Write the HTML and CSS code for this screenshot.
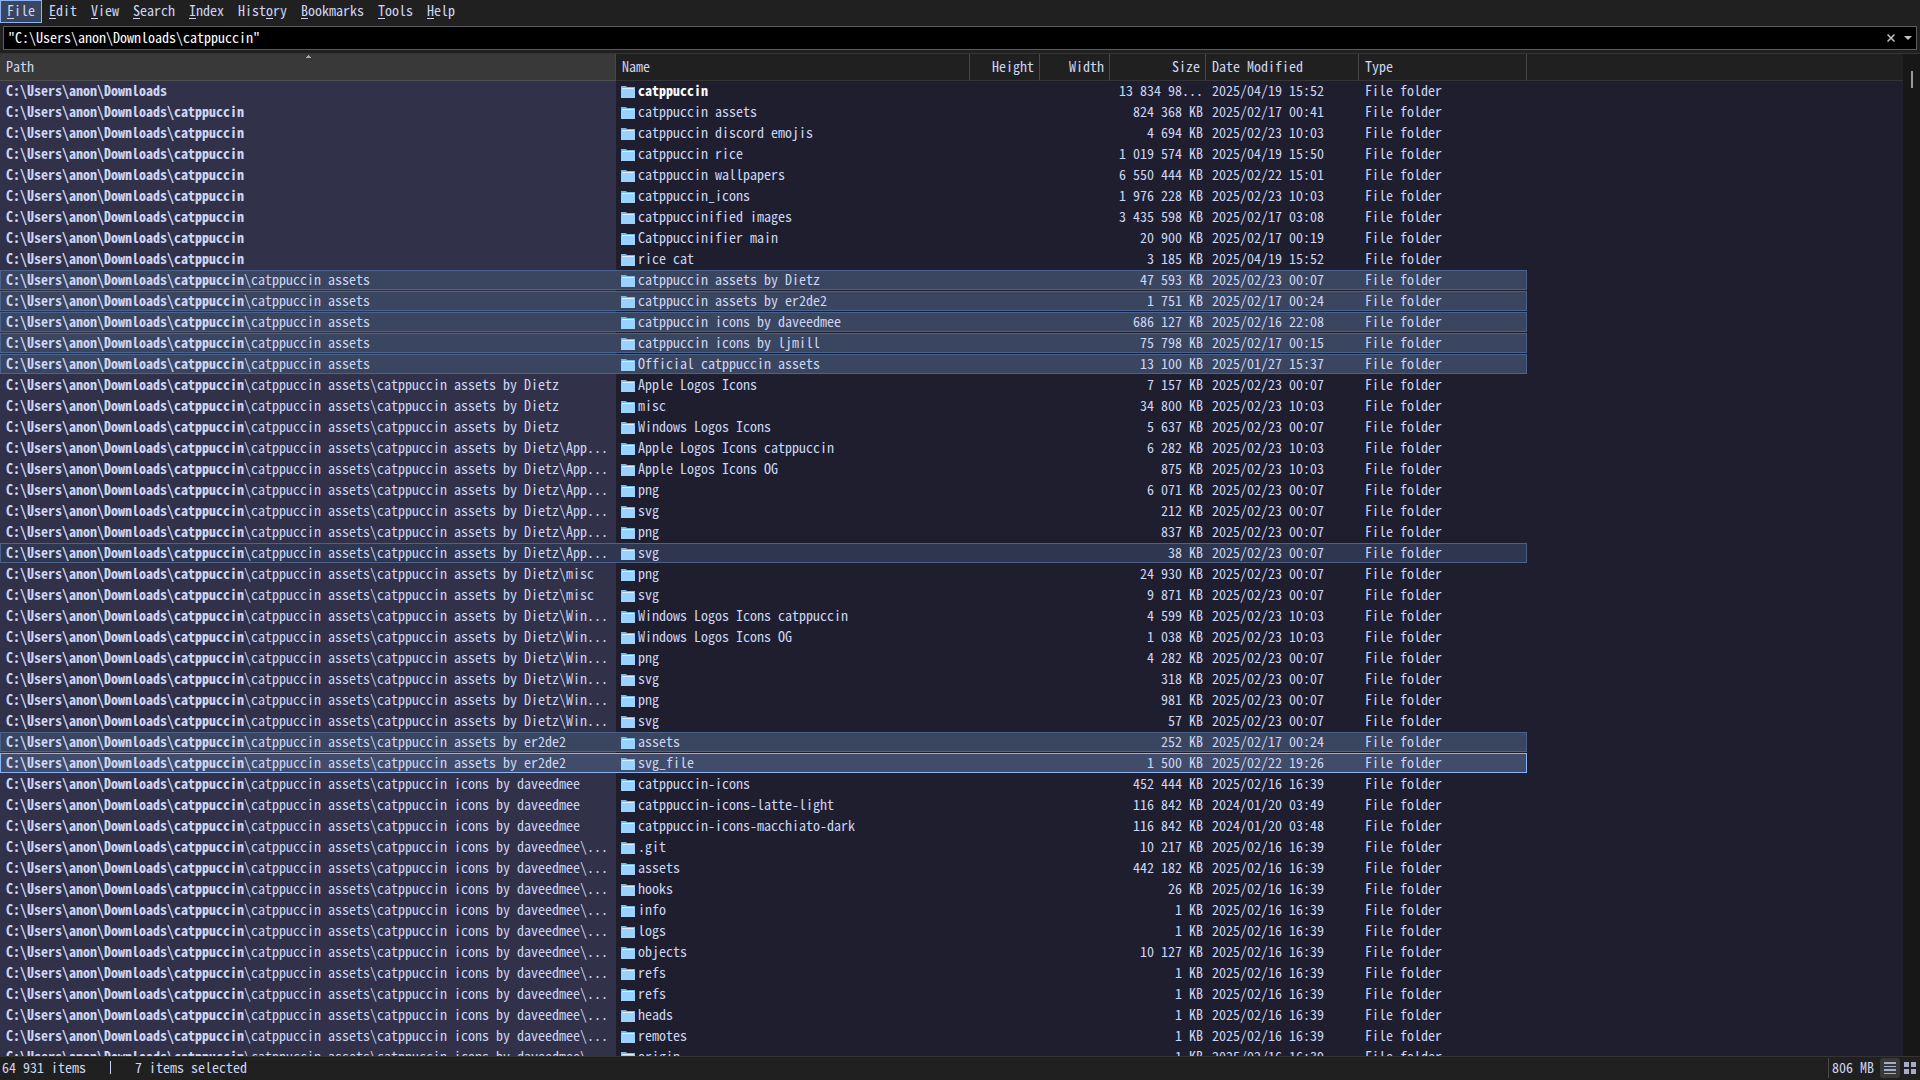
FILE: index.html
```html
<!DOCTYPE html>
<html lang="en">
<head>
<meta charset="utf-8">
<title>File search</title>
<link rel="stylesheet" href="styles.css">
</head>
<body>
<div class="app">
  <nav class="menubar" aria-label="Main menu">
    <button class="menu-item active" type="button"><u>F</u>ile</button>
    <button class="menu-item" type="button"><u>E</u>dit</button>
    <button class="menu-item" type="button"><u>V</u>iew</button>
    <button class="menu-item" type="button"><u>S</u>earch</button>
    <button class="menu-item" type="button"><u>I</u>ndex</button>
    <button class="menu-item" type="button">Hist<u>o</u>ry</button>
    <button class="menu-item" type="button"><u>B</u>ookmarks</button>
    <button class="menu-item" type="button"><u>T</u>ools</button>
    <button class="menu-item" type="button"><u>H</u>elp</button>
  </nav>
  <form class="search">
    <input class="search-input" type="text" aria-label="Search" spellcheck="false" value="&quot;C:\Users\anon\Downloads\catppuccin&quot;">
    <button class="search-button" type="button" aria-label="Clear">
      <svg width="8" height="8" viewBox="0 0 8 8"><path d="M.5 .5l7 7M7.5 .5l-7 7" stroke="#c4c4c4" stroke-width="1.5"/></svg>
    </button>
    <button class="search-button" type="button" aria-label="Recent searches">
      <svg width="8" height="4" viewBox="0 0 8 4"><path d="M0 0h8L4 4z" fill="#c4c4c4"/></svg>
    </button>
  </form>
  <main class="results">
    <div class="list">
      <table class="files">
        <colgroup>
          <col class="col-path"><col class="col-name"><col class="col-height"><col class="col-width">
          <col class="col-size"><col class="col-date"><col class="col-type"><col>
        </colgroup>
        <thead>
          <tr>
            <th class="sorted">Path<svg class="sort-mark" width="5" height="3" viewBox="0 0 5 3"><path d="M0 3V2h1V1h1V0h1v1h1v1h1v1z" fill="#a6a9bd"/></svg></th>
            <th>Name</th>
            <th class="number">Height</th>
            <th class="number">Width</th>
            <th class="number">Size</th>
            <th>Date Modified</th>
            <th>Type</th>
            <th class="filler"></th>
          </tr>
        </thead>
        <tbody id="rows"></tbody>
      </table>
    </div>
    <div class="scrollbar"><div class="thumb"></div></div>
  </main>
  <footer class="status">
    <span class="count">64 931 items</span>
    <span class="divider"></span>
    <span class="selection">7 items selected</span>
    <span class="memory">806 MB</span>
    <button class="view-button active" type="button" aria-label="Details view">
      <svg width="12" height="12" viewBox="0 0 12 12"><path d="M0 0h12v2H0zM0 4h12v1H0zM0 7h12v2H0zM0 11h12v1H0z" fill="#a6adc8"/></svg>
    </button>
    <button class="view-button" type="button" aria-label="Thumbnail view">
      <svg width="12" height="12" viewBox="0 0 12 12"><path d="M0 0h5v5H0zM7 0h5v5H7zM0 7h5v5H0zM7 7h5v5H7z" fill="#a6adc8"/></svg>
    </button>
  </footer>
</div>
<script src="app.js"></script>
</body>
</html>
```

FILE: styles.css
```css
* {
  box-sizing: border-box;
}

body {
  margin: 0;
  background: #202020;
  color: #cdd6f4;
  font: 14px/18px "Noto Sans Mono CJK SC", "Noto Sans Mono CJK JP", monospace;
}

button,
input {
  margin: 0;
  padding: 0;
  border: 0;
  background: none;
  color: inherit;
  font: inherit;
}

.app {
  display: flex;
  flex-direction: column;
  height: 100vh;
}

.menubar {
  display: flex;
  flex: none;
}

.menu-item {
  height: 23px;
  padding: 0 6px 3px;
  border: 1px solid transparent;
  white-space: pre;
}

.menu-item u {
  text-underline-offset: 2px;
}

.menu-item.active {
  border-color: #89b4fa;
  background: #3a4560;
}

.search {
  display: flex;
  flex: none;
  height: 24px;
  margin: 3px;
  border: 1px solid #5c5c5c;
  background: #000;
}

.search-input {
  flex: 1;
  padding: 0 0 2px 4px;
  color: #fff;
  outline: none;
}

.search-button {
  display: flex;
  align-items: center;
  justify-content: center;
  width: 17px;
}

.results {
  display: flex;
  flex: 1;
  min-height: 0;
  border-top: 1px solid #343434;
}

.list {
  flex: 1;
  min-width: 0;
  overflow: hidden;
  background: #1e1e2e;
}

.files {
  width: 100%;
  table-layout: fixed;
  border-spacing: 0;
}

.col-path {
  width: 616px;
  background: #313149;
}

.col-name {
  width: 354px;
}

.col-height,
.col-width {
  width: 70px;
}

.col-size {
  width: 96px;
}

.col-date {
  width: 153px;
}

.col-type {
  width: 168px;
}

th {
  position: relative;
  height: 27px;
  padding: 0 5px 2px 6px;
  border-right: 1px solid #474747;
  border-bottom: 1px solid #343434;
  background: #202020;
  font-weight: normal;
  text-align: left;
}

th.sorted {
  background: #393939;
  border-bottom-color: #505050;
}

th.filler {
  border-right: 0;
}

.sort-mark {
  position: absolute;
  top: 1px;
  left: calc(50% - 2px);
}

td {
  height: 21px;
  padding: 0 0 2px 6px;
  border-bottom: 1px solid transparent;
  background-clip: padding-box;
  white-space: pre;
  overflow: hidden;
}

td.name {
  padding-left: 5px;
}

.number {
  text-align: right;
}

td.number {
  padding-right: 3px;
}

.folder {
  margin-right: 3px;
  vertical-align: -2px;
}

.first .name {
  color: #fff;
  font-weight: bold;
}

.selected {
  --edge: #4b628c;
  --fill: #3a4560;
}

.selected.dim {
  --fill: #2e3650;
}

.selected.focused {
  --edge: #89b4fa;
  --fill: #404c6a;
}

.selected td:not(.filler) {
  background-color: var(--fill);
  box-shadow: inset 0 1px var(--edge), inset 0 -1px var(--edge);
}

.selected td.path {
  box-shadow: inset 1px 1px var(--edge), inset 0 -1px var(--edge);
}

.selected td.type {
  box-shadow: inset 0 1px var(--edge), inset -1px -1px var(--edge);
}

.scrollbar {
  flex: none;
  width: 17px;
  padding: 17px 0 0 8px;
  background: #171717;
}

.thumb {
  width: 2px;
  height: 17px;
  background: #9a9a9a;
}

.status {
  display: flex;
  flex: none;
  align-items: center;
  height: 24px;
  padding: 0 0 2px 2px;
  border-top: 1px solid #343434;
}

.count,
.selection {
  padding-bottom: 2px;
}

.divider {
  width: 1px;
  height: 13px;
  margin: 0 24px;
  background: #cdd6f4;
}

.memory {
  margin-left: auto;
  padding: 0 6px 2px 3px;
  border-left: 1px solid #474747;
}

.view-button {
  display: flex;
  align-items: center;
  justify-content: center;
  width: 20px;
  height: 20px;
  border-radius: 3px;
}

.view-button.active {
  background: #393939;
}
```

FILE: app.js
```js
const MATCH = "C:\\Users\\anon\\Downloads\\catppuccin";
const ASSETS = "\\catppuccin assets";
const DIETZ = ASSETS + "\\catppuccin assets by Dietz";
const ER2 = ASSETS + "\\catppuccin assets by er2de2";
const DAVE = ASSETS + "\\catppuccin icons by daveedmee";

// path below the match, name, size, date, state
const files = [
  [null, "catppuccin", "13 834 98...", "2025/04/19 15:52", "first"],
  ["", "catppuccin assets", "824 368 KB", "2025/02/17 00:41"],
  ["", "catppuccin discord emojis", "4 694 KB", "2025/02/23 10:03"],
  ["", "catppuccin rice", "1 019 574 KB", "2025/04/19 15:50"],
  ["", "catppuccin wallpapers", "6 550 444 KB", "2025/02/22 15:01"],
  ["", "catppuccin_icons", "1 976 228 KB", "2025/02/23 10:03"],
  ["", "catppuccinified images", "3 435 598 KB", "2025/02/17 03:08"],
  ["", "Catppuccinifier main", "20 900 KB", "2025/02/17 00:19"],
  ["", "rice cat", "3 185 KB", "2025/04/19 15:52"],
  [ASSETS, "catppuccin assets by Dietz", "47 593 KB", "2025/02/23 00:07", "selected"],
  [ASSETS, "catppuccin assets by er2de2", "1 751 KB", "2025/02/17 00:24", "selected"],
  [ASSETS, "catppuccin icons by daveedmee", "686 127 KB", "2025/02/16 22:08", "selected"],
  [ASSETS, "catppuccin icons by ljmill", "75 798 KB", "2025/02/17 00:15", "selected"],
  [ASSETS, "Official catppuccin assets", "13 100 KB", "2025/01/27 15:37", "selected"],
  [DIETZ, "Apple Logos Icons", "7 157 KB", "2025/02/23 00:07"],
  [DIETZ, "misc", "34 800 KB", "2025/02/23 10:03"],
  [DIETZ, "Windows Logos Icons", "5 637 KB", "2025/02/23 00:07"],
  [DIETZ + "\\App...", "Apple Logos Icons catppuccin", "6 282 KB", "2025/02/23 10:03"],
  [DIETZ + "\\App...", "Apple Logos Icons OG", "875 KB", "2025/02/23 10:03"],
  [DIETZ + "\\App...", "png", "6 071 KB", "2025/02/23 00:07"],
  [DIETZ + "\\App...", "svg", "212 KB", "2025/02/23 00:07"],
  [DIETZ + "\\App...", "png", "837 KB", "2025/02/23 00:07"],
  [DIETZ + "\\App...", "svg", "38 KB", "2025/02/23 00:07", "selected dim"],
  [DIETZ + "\\misc", "png", "24 930 KB", "2025/02/23 00:07"],
  [DIETZ + "\\misc", "svg", "9 871 KB", "2025/02/23 00:07"],
  [DIETZ + "\\Win...", "Windows Logos Icons catppuccin", "4 599 KB", "2025/02/23 10:03"],
  [DIETZ + "\\Win...", "Windows Logos Icons OG", "1 038 KB", "2025/02/23 10:03"],
  [DIETZ + "\\Win...", "png", "4 282 KB", "2025/02/23 00:07"],
  [DIETZ + "\\Win...", "svg", "318 KB", "2025/02/23 00:07"],
  [DIETZ + "\\Win...", "png", "981 KB", "2025/02/23 00:07"],
  [DIETZ + "\\Win...", "svg", "57 KB", "2025/02/23 00:07"],
  [ER2, "assets", "252 KB", "2025/02/17 00:24", "selected"],
  [ER2, "svg_file", "1 500 KB", "2025/02/22 19:26", "selected focused"],
  [DAVE, "catppuccin-icons", "452 444 KB", "2025/02/16 16:39"],
  [DAVE, "catppuccin-icons-latte-light", "116 842 KB", "2024/01/20 03:49"],
  [DAVE, "catppuccin-icons-macchiato-dark", "116 842 KB", "2024/01/20 03:48"],
  [DAVE + "\\...", ".git", "10 217 KB", "2025/02/16 16:39"],
  [DAVE + "\\...", "assets", "442 182 KB", "2025/02/16 16:39"],
  [DAVE + "\\...", "hooks", "26 KB", "2025/02/16 16:39"],
  [DAVE + "\\...", "info", "1 KB", "2025/02/16 16:39"],
  [DAVE + "\\...", "logs", "1 KB", "2025/02/16 16:39"],
  [DAVE + "\\...", "objects", "10 127 KB", "2025/02/16 16:39"],
  [DAVE + "\\...", "refs", "1 KB", "2025/02/16 16:39"],
  [DAVE + "\\...", "refs", "1 KB", "2025/02/16 16:39"],
  [DAVE + "\\...", "heads", "1 KB", "2025/02/16 16:39"],
  [DAVE + "\\...", "remotes", "1 KB", "2025/02/16 16:39"],
  [DAVE + "\\...", "origin", "1 KB", "2025/02/16 16:39"]
];

const folder = `<svg class="folder" width="14" height="12" viewBox="0 0 14 12"><path d="M0 0h5l1 1h8v11H0z" fill="#74b9f2"/><path d="M0 3h14v9H0z" fill="#99d1ff"/><path d="M1 2h12v1H1z" fill="#e4eefa"/></svg>`;

document.getElementById("rows").innerHTML = files.map(([tail, name, size, date, state = ""]) => {
  const path = tail === null
    ? "<b>C:\\Users\\anon\\Downloads</b>"
    : `<b>${MATCH}</b>${tail}`;
  return `<tr class="${state}"><td class="path">${path}</td><td class="name">${folder}${name}</td>` +
    `<td></td><td></td><td class="number">${size}</td><td>${date}</td><td class="type">File folder</td><td class="filler"></td></tr>`;
}).join("");
```
